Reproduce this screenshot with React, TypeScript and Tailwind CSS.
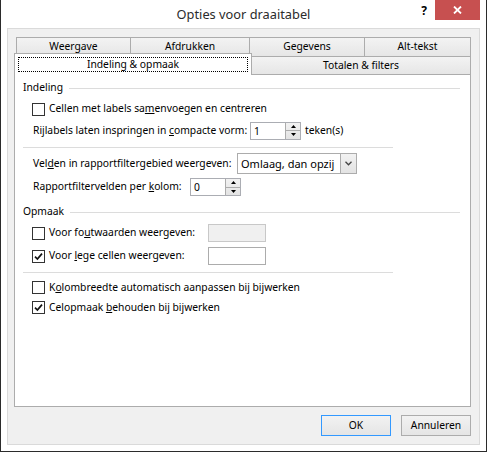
const font = "font-['Noto_Sans','Open_Sans',sans-serif]";

const Check = ({ checked }: { checked?: boolean }) => (
  <span className="w-[13px] h-[13px] border border-[#333333] bg-white flex items-center justify-center shrink-0">
    {checked && (
      <svg width="9" height="9" viewBox="0 0 9 9">
        <path d="M1 4.6 L3.4 7 L8 1.6" stroke="#111" strokeWidth="1.7" fill="none" />
      </svg>
    )}
  </span>
);

const Spin = ({ value }: { value: string }) => (
  <div className="flex w-[51px] h-[18px] border border-[#abadb3] bg-white shrink-0">
    <span className="flex-1 pl-[3px] leading-[16px]">{value}</span>
    <div className="w-[15px] flex flex-col border-l border-[#acacac] bg-linear-to-b from-[#f2f2f2] to-[#e3e3e3]">
      <div className="flex-1 flex items-center justify-center border-b border-[#acacac]">
        <svg width="5" height="3" viewBox="0 0 5 3">
          <path d="M0 3 L2.5 0 L5 3 Z" fill="#000" />
        </svg>
      </div>
      <div className="flex-1 flex items-center justify-center">
        <svg width="5" height="3" viewBox="0 0 5 3">
          <path d="M0 0 L2.5 3 L5 0 Z" fill="#000" />
        </svg>
      </div>
    </div>
  </div>
);

const GroupHeader = ({ label }: { label: string }) => (
  <div className="h-[18px] flex items-center pr-[10px]">
    <span>{label}</span>
    <div className="flex-1 h-px bg-[#dcdcdc] ml-[6px]" />
  </div>
);

const Separator = ({ mb }: { mb: string }) => (
  <div className={"mt-[7px] h-px w-[370px] bg-[#dcdcdc] " + mb} />
);

const rowTabs = [
  { label: "Weergave", w: "w-[114px]" },
  { label: "Afdrukken", w: "w-[119px]" },
  { label: "Gegevens", w: "w-[115px]" },
];

const tabBg = "bg-linear-to-b from-[#f3f3f3] to-[#e6e6e6]";

const App = () => {
  return (
    <div className={"w-[487px] h-[452px] bg-white border-x border-b border-[#2b2b2b] flex flex-col text-[10.3px] text-black whitespace-nowrap " + font}>
      {/* title bar */}
      <div className="h-[28px] grid grid-cols-[1fr_auto_1fr]">
        <div />
        <div className="self-center text-[12.8px] text-[#2b2b2b] pt-[1px]">Opties voor draaitabel</div>
        <div className="flex justify-end items-start pr-[6px]">
          <span className="mt-[4px] mr-[8px] font-bold text-[12px] leading-[14px]">?</span>
          <button className="w-[45px] h-[20px] bg-[#c75050] flex items-center justify-center">
            <svg width="9" height="8" viewBox="0 0 9 8">
              <path d="M1 0.5 L8 7.5 M8 0.5 L1 7.5" stroke="#fff" strokeWidth="1.8" />
            </svg>
          </button>
        </div>
      </div>

      {/* client area */}
      <div className="flex-1 mx-[6px] mb-[6px] bg-[#f0f0f0] border border-[#dadada] pl-[6px] pr-[8px] pt-[8px] flex flex-col">
        {/* back tab row */}
        <div className="flex h-[19px] ml-[2px]">
          {rowTabs.map((t) => (
            <div
              key={t.label}
              className={t.w + " border-t border-l border-[#acacac] text-center leading-[17px] " + tabBg}
            >
              {t.label}
            </div>
          ))}
          <div className={"flex-1 border-t border-x border-[#acacac] text-center leading-[17px] " + tabBg}>
            Alt-tekst
          </div>
        </div>

        {/* front tab row */}
        <div className="flex h-[21px] -mt-[3px]">
          <div className="relative z-10 w-[238px] h-[22px] bg-white border-t border-x border-[#acacac]">
            <div className="mx-[3px] mt-[3px] h-[15px] border border-dotted border-black flex items-center justify-center">
              Indeling &amp; opmaak
            </div>
          </div>
          <div className={"flex-1 mt-[3px] h-[18px] border-t border-r border-[#acacac] text-center leading-[17px] " + tabBg}>
            Totalen &amp; filters
          </div>
        </div>

        {/* panel */}
        <div className="h-[333px] bg-white border border-[#acacac] pl-[8px] pt-[4px] flex flex-col">
          <GroupHeader label="Indeling" />

          <div className="h-[24px] flex items-center pl-[9px] gap-[4px]">
            <Check />
            <span>
              Cellen met labels sa<u>m</u>envoegen en centreren
            </span>
          </div>

          <div className="h-[19px] flex items-center pl-[10px]">
            <span className="w-[217px]">
              Rijlabels laten inspringen in <u>c</u>ompacte vorm:
            </span>
            <Spin value="1" />
            <span className="ml-[4px]">teken(s)</span>
          </div>

          <Separator mb="mb-[5px]" />

          <div className="h-[21px] flex items-center pl-[10px]">
            <span className="w-[204px]">
              Vel<u>d</u>en in rapportfiltergebied weergeven:
            </span>
            <div className="w-[120px] h-[21px] flex border border-[#acacac] bg-white">
              <span className="flex-1 pl-[3px] leading-[19px] text-[11px]">Omlaag, dan opzij</span>
              <div className="w-[16px] border-l border-[#acacac] bg-linear-to-b from-[#f2f2f2] to-[#e3e3e3] flex items-center justify-center">
                <svg width="7" height="5" viewBox="0 0 7 5">
                  <path d="M0.5 0.8 L3.5 3.8 L6.5 0.8" stroke="#444" strokeWidth="1.3" fill="none" />
                </svg>
              </div>
            </div>
          </div>

          <div className="mt-[4px] h-[18px] flex items-center pl-[10px]">
            <span className="w-[157px]">
              Rapportfiltervelden per <u>k</u>olom:
            </span>
            <Spin value="0" />
          </div>

          <div className="mt-[7px]">
            <GroupHeader label="Opmaak" />
          </div>

          <div className="mt-[3px] h-[18px] flex items-center pl-[9px]">
            <Check />
            <span className="ml-[4px] w-[159px]">
              Voor fo<u>u</u>twaarden weergeven:
            </span>
            <div className="w-[58px] h-[18px] border border-[#c8c8c8] bg-[#f0f0f0]" />
          </div>

          <div className="mt-[5px] h-[18px] flex items-center pl-[9px]">
            <Check checked />
            <span className="ml-[4px] w-[159px]">
              Voor <u>l</u>ege cellen weergeven:
            </span>
            <div className="w-[58px] h-[18px] border border-[#acacac] bg-white" />
          </div>

          <Separator mb="mb-[6px]" />

          <div className="h-[17px] flex items-center pl-[9px] gap-[4px]">
            <Check />
            <span>
              K<u>o</u>lombreedte automatisch aanpassen bij bijwerken
            </span>
          </div>

          <div className="mt-[3px] h-[17px] flex items-center pl-[9px] gap-[4px]">
            <Check checked />
            <span>
              Celopmaak <u>b</u>ehouden bij bijwerken
            </span>
          </div>
        </div>

        {/* buttons */}
        <div className="mt-[8px] flex justify-end gap-[10px]">
          <button className="w-[70px] h-[21px] border border-[#3399ff] bg-linear-to-b from-[#f2f2f2] to-[#e5e5e5]">
            OK
          </button>
          <button className="w-[70px] h-[21px] border border-[#acacac] bg-linear-to-b from-[#f2f2f2] to-[#e5e5e5]">
            Annuleren
          </button>
        </div>
      </div>
    </div>
  );
};

export default App;
